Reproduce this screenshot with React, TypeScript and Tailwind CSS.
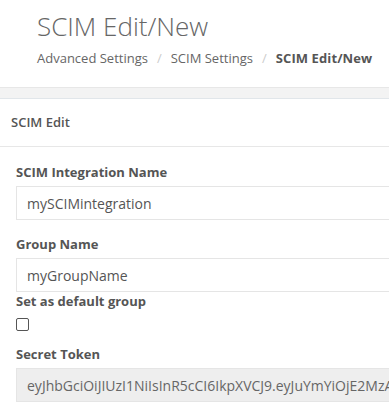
import React from "react";

// ---------------------------------------------------------------------------
// Constants
// ---------------------------------------------------------------------------

const FONT = "font-['Open_Sans',sans-serif]";

const LABEL = "mb-[5px] block text-[13px] font-bold leading-[18px] text-[#555]";

const INPUT =
  "block h-[34px] w-[420px] border border-[#e5e5e5] px-[10px] text-[14px] outline-none";

const CRUMBS = ["Advanced Settings", "SCIM Settings"];

// ---------------------------------------------------------------------------
// Component
// ---------------------------------------------------------------------------

export default function App() {
  return (
    <div className={`${FONT} flex h-[413px] w-[389px] flex-col overflow-hidden bg-[#f3f3f3]`}>
      {/* Page header */}
      <div className="h-[88px] shrink-0 border-b border-[#e7e7e7] bg-white pl-[37px] pt-[9px]">
        <h1 className="text-[26px] font-light leading-[34px] text-[#666]">
          SCIM Edit/New
        </h1>
        <nav className="mt-[6px] flex items-center text-[13px] leading-[18px] text-[#666]">
          {CRUMBS.map((c) => (
            <React.Fragment key={c}>
              <span>{c}</span>
              <span className="px-[9px] text-[#ccc]">/</span>
            </React.Fragment>
          ))}
          <span className="font-bold tracking-[0.1px] text-[#555]">SCIM Edit/New</span>
        </nav>
      </div>

      {/* Panel */}
      <div className="mt-[10px] w-[480px] grow border-t border-[#e1e6ea] bg-white">
        <div className="flex h-[48px] items-center border-b border-[#e7e7e7] pl-[11px] pt-[1px] text-[13px] font-semibold text-[#555]">
          SCIM Edit
        </div>

        <div className="pl-[16px] pt-[16px]">
          <div className="mb-[15px]">
            <label className={LABEL}>SCIM Integration Name</label>
            <input className={`${INPUT} bg-white text-[#555]`} defaultValue="mySCIMintegration" />
          </div>

          <div>
            <label className={LABEL}>Group Name</label>
            <input className={`${INPUT} bg-white text-[#555]`} defaultValue="myGroupName" />
          </div>

          <div className="mb-[14px]">
            <label className={LABEL}>Set as default group</label>
            <input
              type="checkbox"
              className="mt-[8px] block size-[13px] appearance-none rounded-[2px] border border-[#555] bg-white"
            />
          </div>

          <div>
            <label className={LABEL}>Secret Token</label>
            <input
              disabled
              className={`${INPUT} h-[33px] bg-[#eee] text-[#666]`}
              defaultValue="eyJhbGciOiJIUzI1NiIsInR5cCI6IkpXVCJ9.eyJuYmYiOjE2MzA1"
            />
          </div>
        </div>
      </div>
    </div>
  );
}
